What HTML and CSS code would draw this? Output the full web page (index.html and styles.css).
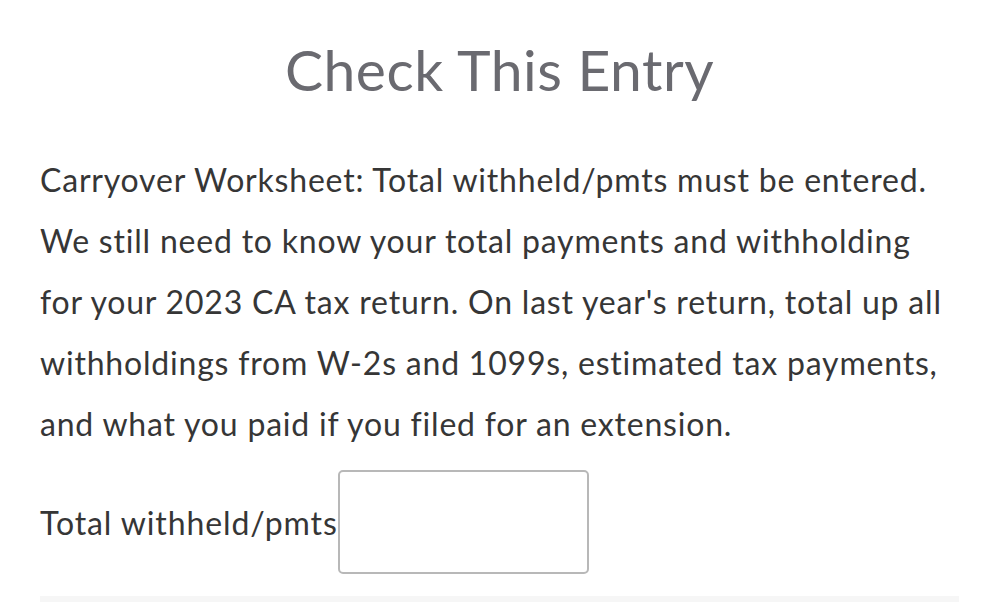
FILE: index.html
```html
<!DOCTYPE html>
<html lang="en">
<head>
    <meta charset="UTF-8">
    <meta name="viewport" content="width=device-width, initial-scale=1.0">
    <title>Check This Entry</title>
    <link rel="stylesheet" href="styles.css">
</head>
<body>
    <div class="container">
        <h1>Check This Entry</h1>

        <p class="message">Carryover Worksheet: Total withheld/pmts must be entered. We still need to know your total payments and withholding for your 2023 CA tax return. On last year's return, total up all withholdings from W-2s and 1099s, estimated tax payments, and what you paid if you filed for an extension.</p>

        <div class="form-row">
            <label for="total">Total withheld/pmts</label>
            <input type="text" id="total">
        </div>

        <div class="footer-bar"></div>
    </div>
</body>
</html>
```

FILE: styles.css
```css
body {
    margin: 0;
    font-family: Lato, "Open Sans", sans-serif;
    background: #fff;
    color: #363636;
}
.container {
    padding: 0 40px;
}
h1 {
    margin: 0;
    padding-top: 33px;
    text-align: center;
    font-size: 57px;
    font-weight: 400;
    letter-spacing: 0.5px;
    line-height: 72px;
    color: #6a6a70;
}
.message {
    max-width: 915px;
    margin: 44px 0 0;
    font-size: 32px;
    letter-spacing: 0.8px;
    line-height: 61px;
}
.form-row {
    display: flex;
    align-items: center;
    margin-top: 16px;
}
.form-row label {
    font-size: 32px;
    letter-spacing: 0.9px;
}
.form-row input {
    width: 247px;
    height: 100px;
    padding: 0;
    margin: 0;
    border: 2px solid #b8b8b8;
    border-radius: 5px;
    background: #fff;
}
.footer-bar {
    height: 10px;
    margin-top: 22px;
    background: #f6f6f6;
}
```
